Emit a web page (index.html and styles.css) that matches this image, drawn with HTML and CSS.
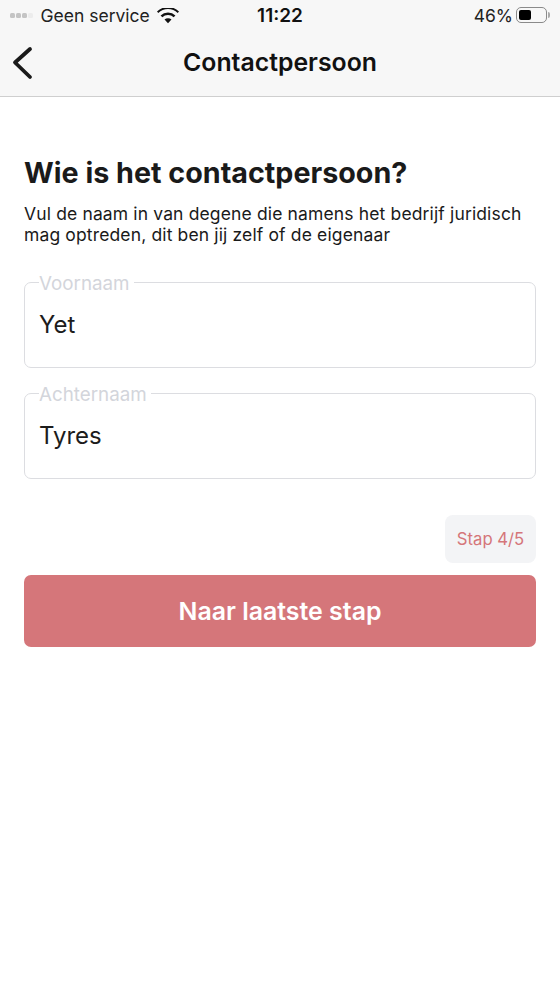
FILE: index.html
```html
<!DOCTYPE html>
<html>
<head>
    <title>Contactpersoon</title>
    <link rel="stylesheet" href="styles.css">
</head>
<body>
    <div class="top">
        <div class="status">
            <div class="status-left">
                <span class="dots"><i></i><i></i><i></i><i></i></span>
                <span>Geen service</span>
                <svg class="wifi" width="22" height="16" viewBox="0 0 24 17">
                    <path d="M12 16.5 8.2 12.4a5.4 5.4 0 0 1 7.6 0Z" fill="#111"/>
                    <path d="M5.8 9.9a8.8 8.8 0 0 1 12.4 0l1.9-2a11.6 11.6 0 0 0-16.2 0Z" fill="#111"/>
                    <path d="M1.4 5.3a15 15 0 0 1 21.2 0L24 3.6a17.2 17.2 0 0 0-24 0Z" fill="#111"/>
                </svg>
            </div>
            <div class="status-time">11:22</div>
            <div class="status-right">
                <span>46%</span>
                <span class="battery"><span class="battery-fill"></span></span>
                <span class="battery-tip"></span>
            </div>
        </div>
        <div class="nav">
            <svg class="back" width="22" height="34" viewBox="0 0 22 34">
                <path d="M19 3 4 16.5 19 31" fill="none" stroke="#1a1a1a" stroke-width="3.8" stroke-linecap="round" stroke-linejoin="round"/>
            </svg>
            <div class="nav-title">Contactpersoon</div>
        </div>
    </div>

    <div class="content">
        <h2>Wie is het contactpersoon?</h2>
        <p>Vul de naam in van degene die namens het bedrijf juridisch mag optreden, dit ben jij zelf of de eigenaar</p>

        <fieldset class="field">
            <legend>Voornaam</legend>
            <div class="value">Yet</div>
        </fieldset>
        <fieldset class="field">
            <legend>Achternaam</legend>
            <div class="value">Tyres</div>
        </fieldset>

        <div class="step-row">
            <div class="step">Stap 4/5</div>
        </div>
        <div class="next">Naar laatste stap</div>
    </div>
</body>
</html>
```

FILE: styles.css
```css
* {
    box-sizing: border-box;
}

body {
    margin: 0;
    background: #fff;
    font-family: Inter, "Liberation Sans", sans-serif;
    color: #1a1a1a;
}

.top {
    height: 97px;
    background: #f7f7f7;
    border-bottom: 1px solid #cfcfcf;
}

.status {
    height: 30px;
    margin-bottom: 2px;
    display: flex;
    align-items: center;
    justify-content: space-between;
    padding: 0 10px;
    font-size: 17.5px;
    color: #222;
}

.status-left {
    width: 200px;
    display: flex;
    align-items: center;
    gap: 8px;
}

.dots {
    display: flex;
    gap: 1.5px;
}

.dots i {
    width: 4.5px;
    height: 5px;
    border-radius: 1.5px;
    background: #c4c4c4;
}

.dots i:last-child {
    background: #ececec;
}

.wifi {
    margin-top: 1px;
    margin-left: -1px;
}

.status-time {
    font-size: 19px;
    font-weight: 600;
    color: #111;
}

.status-right {
    width: 200px;
    display: flex;
    align-items: center;
    justify-content: flex-end;
}

.battery {
    width: 31px;
    height: 16px;
    margin-left: 3px;
    padding: 2px;
    border: 1px solid #8a8a8a;
    border-radius: 5px;
}

.battery-fill {
    display: block;
    width: 12px;
    height: 10px;
    background: #000;
    border-radius: 2px;
}

.battery-tip {
    width: 2px;
    height: 6px;
    margin-left: 1px;
    background: #aaa;
    border-radius: 0 2px 2px 0;
}

.nav {
    height: 64px;
    display: flex;
    align-items: center;
    position: relative;
    padding: 0 12px 4px;
}

.back {
    position: absolute;
    left: 11px;
    top: 14px;
}

.nav-title {
    width: 100%;
    text-align: center;
    font-size: 24.8px;
    font-weight: 600;
    color: #111;
}

.content {
    padding: 58px 24px 0;
}

h2 {
    margin: 0;
    font-size: 28.7px;
    line-height: 36px;
    font-weight: 700;
}

p {
    margin: 12px 0 0;
    font-size: 17.5px;
    line-height: 21px;
    letter-spacing: 0.14px;
}

.field {
    height: 99px;
    margin: 0;
    padding: 0 14px;
    border: 1.5px solid #dcdde1;
    border-radius: 7px;
}

p + .field {
    margin-top: 24px;
}

.field + .field {
    margin-top: 12px;
}

legend {
    padding: 4px 4px 0 0;
    font-size: 18.8px;
    line-height: 22px;
    color: #d3d5db;
}

.value {
    margin-top: 15px;
    font-size: 24px;
    line-height: 30px;
    color: #1c1c1c;
}

.step-row {
    display: flex;
    justify-content: flex-end;
    margin-top: 36px;
}

.step {
    width: 91px;
    height: 48px;
    display: flex;
    align-items: center;
    justify-content: center;
    background: #f3f4f6;
    border-radius: 8px;
    font-size: 16.7px;
    color: #d5767a;
}

.next {
    height: 72px;
    margin-top: 12px;
    display: flex;
    align-items: center;
    justify-content: center;
    background: #d5767a;
    border-radius: 7px;
    font-size: 24.9px;
    font-weight: 600;
    color: #fff;
}
```
